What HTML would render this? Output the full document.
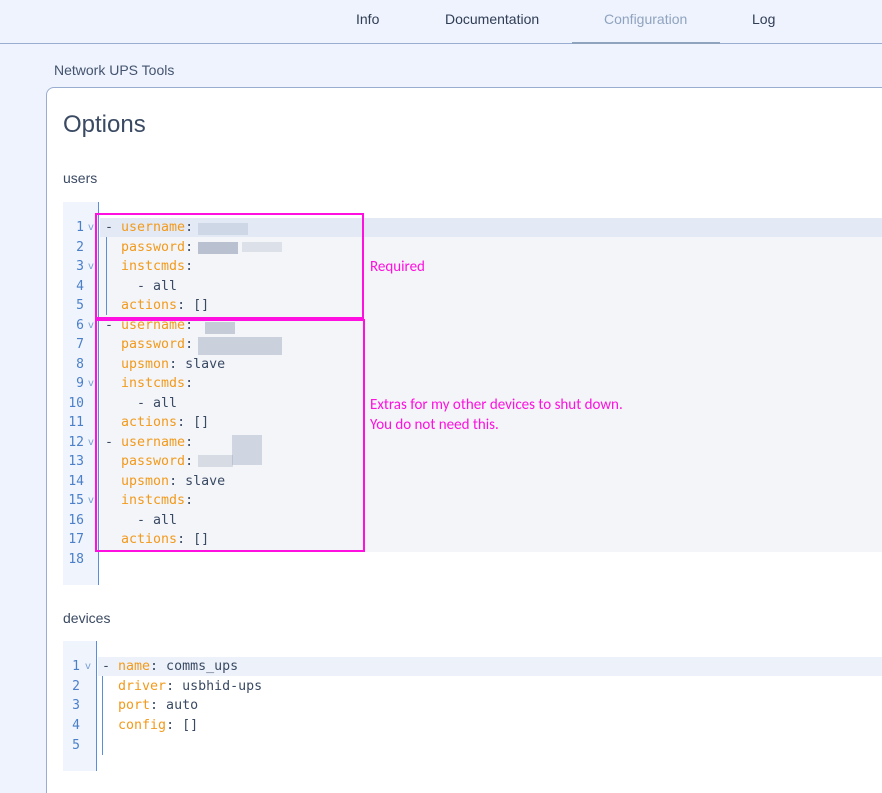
<!DOCTYPE html>
<html style="width:882px;height:793px;overflow:hidden"><head><meta charset="utf-8"><style>
*{margin:0;padding:0;box-sizing:border-box}
body{width:882px;height:793px;overflow:hidden;background:#eef3fd;font-family:"Liberation Sans",sans-serif;position:relative;color:#3b4a63}
.a{position:absolute;white-space:nowrap}
.nav{top:11px;font-size:14px;color:#2f3d55}
.code{font-family:"DejaVu Sans Mono","Liberation Mono",monospace;font-size:13.3px;color:#3a4a63}
.k{color:#f29a1b}
.ln{font-family:"DejaVu Sans Mono",monospace;font-size:13px;color:#4a7fc9;text-align:right;width:22px}
.chev{font-family:"DejaVu Sans",sans-serif;font-size:10px;color:#7aa0d8}
.bl{position:absolute;background:#7f8ea8}
.note{color:#ff10e0;font-size:15px;font-family:"Carlito","Liberation Sans",sans-serif}
</style></head><body>
<div class="a" style="left:0;top:43px;width:882px;height:1px;background:#98add0"></div>
<div class="a nav" style="left:356px">Info</div>
<div class="a nav" style="left:445px">Documentation</div>
<div class="a nav" style="left:604px;color:#8fa3c0">Configuration</div>
<div class="a nav" style="left:752px">Log</div>
<div class="a" style="left:572px;top:42px;width:148px;height:2px;background:#8fa3bf"></div>
<div class="a" style="left:54px;top:62px;font-size:14px;color:#44546f">Network UPS Tools</div>
<div class="a" style="left:46px;top:87px;width:860px;height:720px;background:#fff;border:1px solid #98add0;border-radius:8px"></div>
<div class="a" style="left:63px;top:111px;font-size:24px;color:#3b4a63">Options</div>
<div class="a" style="left:63px;top:170px;font-size:14px;color:#3b4a63">users</div>
<div class="a" style="left:63px;top:610px;font-size:14px;color:#3b4a63">devices</div>

<!-- editor 1 -->
<div class="a" style="left:63px;top:202px;width:36px;height:383px;background:#f0f4fc;border-right:1px solid #5a8fd6"></div>
<div class="a" style="left:100px;top:218px;width:782px;height:334px;background:#f3f5f9"></div>
<div class="a" style="left:100px;top:218px;width:782px;height:19px;background:#e3eaf5"></div>
<div class="a" style="left:106px;top:237px;width:1px;height:78px;background:#5a8fd6"></div>
<div class="a" style="left:62px;top:218px">
<div class="ln">
<div style="height:19.5px;line-height:19.5px">1</div><div style="height:19.5px;line-height:19.5px">2</div><div style="height:19.5px;line-height:19.5px">3</div><div style="height:19.5px;line-height:19.5px">4</div><div style="height:19.5px;line-height:19.5px">5</div><div style="height:19.5px;line-height:19.5px">6</div><div style="height:19.5px;line-height:19.5px">7</div><div style="height:19.5px;line-height:19.5px">8</div><div style="height:19.5px;line-height:19.5px">9</div><div style="height:19.5px;line-height:19.5px">10</div><div style="height:19.5px;line-height:19.5px">11</div><div style="height:19.5px;line-height:19.5px">12</div><div style="height:19.5px;line-height:19.5px">13</div><div style="height:19.5px;line-height:19.5px">14</div><div style="height:19.5px;line-height:19.5px">15</div><div style="height:19.5px;line-height:19.5px">16</div><div style="height:19.5px;line-height:19.5px">17</div><div style="height:19.5px;line-height:19.5px">18</div>
</div></div>
<div class="a chev" style="left:88px;top:222px">v</div>
<div class="a chev" style="left:88px;top:261px">v</div>
<div class="a chev" style="left:88px;top:320px">v</div>
<div class="a chev" style="left:88px;top:378px">v</div>
<div class="a chev" style="left:88px;top:437px">v</div>
<div class="a chev" style="left:88px;top:495px">v</div>
<div class="a code" style="left:105px;top:218px;line-height:19.5px">
<div>- <span class="k">username</span>:</div>
<div>&nbsp; <span class="k">password</span>:</div>
<div>&nbsp; <span class="k">instcmds</span>:</div>
<div>&nbsp; &nbsp; - all</div>
<div>&nbsp; <span class="k">actions</span>: []</div>
<div>- <span class="k">username</span>:</div>
<div>&nbsp; <span class="k">password</span>:</div>
<div>&nbsp; <span class="k">upsmon</span>: slave</div>
<div>&nbsp; <span class="k">instcmds</span>:</div>
<div>&nbsp; &nbsp; - all</div>
<div>&nbsp; <span class="k">actions</span>: []</div>
<div>- <span class="k">username</span>:</div>
<div>&nbsp; <span class="k">password</span>:</div>
<div>&nbsp; <span class="k">upsmon</span>: slave</div>
<div>&nbsp; <span class="k">instcmds</span>:</div>
<div>&nbsp; &nbsp; - all</div>
<div>&nbsp; <span class="k">actions</span>: []</div>
</div>
<!-- blurred values -->
<div class="bl" style="left:198px;top:223px;width:50px;height:12px;opacity:.2"></div>
<div class="bl" style="left:198px;top:242px;width:40px;height:12px;opacity:.5"></div>
<div class="bl" style="left:242px;top:242px;width:40px;height:10px;opacity:.2"></div>
<div class="bl" style="left:205px;top:322px;width:30px;height:12px;opacity:.4"></div>
<div class="bl" style="left:198px;top:337px;width:84px;height:18px;opacity:.35"></div>
<div class="bl" style="left:232px;top:435px;width:30px;height:30px;opacity:.3"></div>
<div class="bl" style="left:198px;top:455px;width:35px;height:12px;opacity:.25"></div>
<!-- magenta boxes -->
<div class="a" style="left:95px;top:213px;width:269px;height:106px;border:2px solid #ff10e0"></div>
<div class="a" style="left:95px;top:319px;width:270px;height:233px;border:2px solid #ff10e0"></div>
<div class="a note" style="left:370px;top:258px">Required</div>
<div class="a note" style="left:370px;top:395px;line-height:20px">Extras for my other devices to shut down.<br>You do not need this.</div>

<!-- editor 2 -->
<div class="a" style="left:63px;top:641px;width:34px;height:130px;background:#f0f4fc;border-right:1px solid #5a8fd6"></div>
<div class="a" style="left:98px;top:657px;width:784px;height:19px;background:#edf2fa"></div>
<div class="a" style="left:102px;top:676px;width:1px;height:79px;background:#5a8fd6"></div>
<div class="a" style="left:58px;top:657px">
<div class="ln">
<div style="height:19.7px;line-height:19.7px">1</div><div style="height:19.7px;line-height:19.7px">2</div><div style="height:19.7px;line-height:19.7px">3</div><div style="height:19.7px;line-height:19.7px">4</div><div style="height:19.7px;line-height:19.7px">5</div>
</div></div>
<div class="a chev" style="left:85px;top:661px">v</div>
<div class="a code" style="left:102px;top:657px;line-height:19.7px">
<div>- <span class="k">name</span>: comms_ups</div>
<div>&nbsp; <span class="k">driver</span>: usbhid-ups</div>
<div>&nbsp; <span class="k">port</span>: auto</div>
<div>&nbsp; <span class="k">config</span>: []</div>
</div>
</body></html>
